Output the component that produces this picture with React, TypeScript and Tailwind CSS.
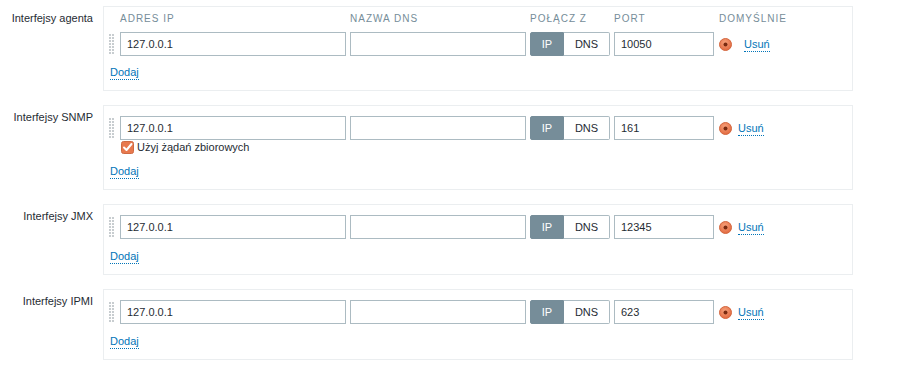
import React from "react";

const font = "font-['Liberation_Sans',Arial,sans-serif]";
const cols = "grid grid-cols-[7px_226px_176px_80px_100px_auto] gap-x-[4px]";

function Handle() {
  const dots = [];
  for (let r = 0; r < 7; r++) {
    for (let c = 0; c < 2; c++) {
      dots.push(<rect key={`${r}-${c}`} x={c * 3} y={r * 3} width={2} height={2} fill="#c8cdd0" />);
    }
  }
  return (
    <svg width="5" height="20" viewBox="0 0 5 20" className="block">
      {dots}
    </svg>
  );
}

function Radio() {
  return (
    <svg width="13" height="13" viewBox="0 0 13 13" className="block">
      <defs>
        <radialGradient id="rg" cx="45%" cy="35%" r="65%">
          <stop offset="0%" stopColor="#f7a27c" />
          <stop offset="100%" stopColor="#e2693f" />
        </radialGradient>
      </defs>
      <circle cx="6.5" cy="6.5" r="6" fill="url(#rg)" stroke="#d3673f" strokeWidth="1" />
      <circle cx="6.5" cy="6.5" r="2" fill="#7a2a10" />
    </svg>
  );
}

function Checkbox() {
  return (
    <svg width="13" height="13" viewBox="0 0 13 13" className="block">
      <rect x="0.5" y="0.5" width="12" height="12" rx="2" fill="#e8794e" stroke="#cf6a43" />
      <path d="M3 6.5 L5.5 9 L10.5 3" fill="none" stroke="#ffffff" strokeWidth="2" strokeLinecap="round" strokeLinejoin="round" />
    </svg>
  );
}

function Link({ children }: { children: React.ReactNode }) {
  return (
    <span className="text-[#0275b8] border-b border-dotted border-[#0275b8] leading-[13px] inline-block">
      {children}
    </span>
  );
}

function Row({ port, agent }: { port: string; agent?: boolean }) {
  return (
    <div className={`${cols} items-center`}>
      <div className="flex items-center h-[24px]">
        <Handle />
      </div>
      <div className="h-[24px] border border-[#acbbc2] bg-white px-[6px] flex items-center text-[11px] text-[#1f2c33]">
        127.0.0.1
      </div>
      <div className="h-[24px] border border-[#acbbc2] bg-white" />
      <div className="flex h-[24px] text-[11px]">
        <div className="w-[34px] bg-[#768d99] border border-[#768d99] text-white flex items-center justify-center rounded-l-[2px]">
          IP
        </div>
        <div className="w-[46px] bg-white border border-l-0 border-[#acbbc2] text-[#1f2c33] flex items-center justify-center rounded-r-[2px]">
          DNS
        </div>
      </div>
      <div className="h-[24px] border border-[#acbbc2] bg-white px-[6px] flex items-center text-[11px] text-[#1f2c33]">
        {port}
      </div>
      <div className="flex items-center ml-[1px] text-[11px]">
        <Radio />
        <div className={agent ? "ml-[12px]" : "ml-[6px]"}>
          <Link>Usuń</Link>
        </div>
      </div>
    </div>
  );
}

function Panel({
  label,
  port,
  agent,
  snmp,
}: {
  label: string;
  port: string;
  agent?: boolean;
  snmp?: boolean;
}) {
  return (
    <div className="flex">
      <div className="w-[93px] text-right pt-[5px] text-[11px] leading-[14px] text-[#1f2c33]">{label}</div>
      <div
        className={`ml-[10px] w-[750px] border border-[#ebeef0] bg-white pl-[5px] pb-[11px] ${
          agent ? "pt-[5px]" : "pt-[10px]"
        }`}
      >
        {agent && (
          <div className={`${cols} text-[10px] leading-[14px] tracking-[1px] text-[#768d99] mb-[6px]`}>
            <div />
            <div>ADRES IP</div>
            <div>NAZWA DNS</div>
            <div>POŁĄCZ Z</div>
            <div>PORT</div>
            <div className="ml-[1px]">DOMYŚLNIE</div>
          </div>
        )}
        <Row port={port} agent={agent} />
        {snmp && (
          <div className="flex items-center h-[14px] ml-[12px] text-[11px] text-[#1f2c33]">
            <Checkbox />
            <span className="ml-[3px]">Użyj żądań zbiorowych</span>
          </div>
        )}
        <div className={`${agent ? "mt-[9px]" : "mt-[10px]"} ml-[1px] text-[11px] leading-[14px] h-[14px]`}>
          <Link>Dodaj</Link>
        </div>
      </div>
    </div>
  );
}

export default function App() {
  return (
    <div className={`${font} bg-white w-[909px] h-[370px] pt-[6px] flex flex-col gap-[14px]`}>
      <Panel label="Interfejsy agenta" port="10050" agent />
      <Panel label="Interfejsy SNMP" port="161" snmp />
      <Panel label="Interfejsy JMX" port="12345" />
      <Panel label="Interfejsy IPMI" port="623" />
    </div>
  );
}
